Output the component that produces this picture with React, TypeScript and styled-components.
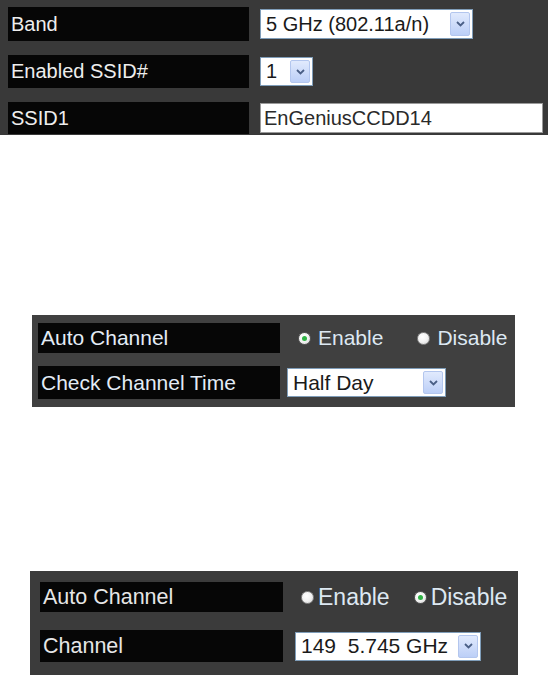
import React from "react";
import styled, { createGlobalStyle } from "styled-components";

const GlobalStyle = createGlobalStyle`
  html, body {
    margin: 0;
    padding: 0;
    background: #ffffff;
  }
  body {
    font-family: "Liberation Sans", Arial, sans-serif;
  }
`;

const Page = styled.div`
  display: flex;
  flex-direction: column;
  align-items: flex-start;
  width: 550px;
  height: 675px;
  overflow: hidden;
`;

const Panel = styled.div<{
  $w: number;
  $h: number;
  $mt: number;
  $ml: number;
  $pad: string;
  $bg: string;
  $gap: number;
}>`
  box-sizing: border-box;
  flex: none;
  width: ${(p) => p.$w}px;
  height: ${(p) => p.$h}px;
  margin: ${(p) => p.$mt}px 0 0 ${(p) => p.$ml}px;
  padding: ${(p) => p.$pad};
  background: ${(p) => p.$bg};
  display: flex;
  flex-direction: column;
  gap: ${(p) => p.$gap}px;
`;

const Row = styled.div<{ $h: number; $gap: number }>`
  display: flex;
  align-items: center;
  height: ${(p) => p.$h}px;
  gap: ${(p) => p.$gap}px;
`;

const Label = styled.div<{ $w: number; $size: number; $color: string }>`
  box-sizing: border-box;
  flex: none;
  width: ${(p) => p.$w}px;
  height: 100%;
  background: #060606;
  color: ${(p) => p.$color};
  font-size: ${(p) => p.$size}px;
  padding-left: 3px;
  display: flex;
  align-items: center;
  white-space: nowrap;
`;

const SelectBox = styled.div<{ $w: number; $h: number; $size: number }>`
  box-sizing: border-box;
  flex: none;
  width: ${(p) => p.$w}px;
  height: ${(p) => p.$h}px;
  background: #ffffff;
  border: 1px solid #7f9db9;
  display: flex;
  align-items: center;
  justify-content: space-between;
  padding: 2px 2px 2px 5px;
  font-size: ${(p) => p.$size}px;
  color: #1a1a1a;
  white-space: pre;
`;

const DropButton = styled.span`
  box-sizing: border-box;
  flex: none;
  width: 20px;
  height: 100%;
  border: 1px solid #b3c6ee;
  border-radius: 2px;
  background: linear-gradient(#e1eafd, #bccff7);
  display: flex;
  align-items: center;
  justify-content: center;
`;

const TextInput = styled.div<{ $w: number; $h: number; $size: number }>`
  box-sizing: border-box;
  flex: none;
  width: ${(p) => p.$w}px;
  height: ${(p) => p.$h}px;
  background: #ffffff;
  border: 1px solid #9a9a9a;
  padding-left: 3px;
  display: flex;
  align-items: center;
  font-size: ${(p) => p.$size}px;
  color: #2a2a2a;
`;

const RadioGroup = styled.div<{ $pl: number; $spread: number }>`
  display: flex;
  align-items: center;
  gap: ${(p) => p.$spread}px;
  padding-left: ${(p) => p.$pl}px;
`;

const RadioOption = styled.label<{ $size: number; $gap: number }>`
  display: flex;
  align-items: center;
  gap: ${(p) => p.$gap}px;
  font-size: ${(p) => p.$size}px;
  color: #dde8f2;
  white-space: nowrap;
`;

const RadioDot = styled.span<{ $on: boolean }>`
  box-sizing: border-box;
  width: 13px;
  height: 13px;
  border-radius: 50%;
  border: 1px solid ${(p) => (p.$on ? "#5a5a5a" : "#8a8a8a")};
  background: radial-gradient(circle at 40% 35%, #ffffff 0%, #f2f2f2 50%, #cfcfcf 100%);
  display: flex;
  align-items: center;
  justify-content: center;

  &::after {
    content: "";
    display: ${(p) => (p.$on ? "block" : "none")};
    width: 5px;
    height: 5px;
    border-radius: 50%;
    background: #2fb245;
  }
`;

const Chevron = () => (
  <svg width="9" height="6" viewBox="0 0 9 6">
    <path d="M1 1 L4.5 4.5 L8 1" fill="none" stroke="#4a5f86" strokeWidth="1.8" />
  </svg>
);

const Select: React.FC<{ w: number; h: number; size: number; value: string }> = ({
  w,
  h,
  size,
  value,
}) => (
  <SelectBox $w={w} $h={h} $size={size}>
    <span>{value}</span>
    <DropButton>
      <Chevron />
    </DropButton>
  </SelectBox>
);

const Radios: React.FC<{
  pl: number;
  spread: number;
  size: number;
  gap: number;
  enabled: boolean;
}> = ({ pl, spread, size, gap, enabled }) => (
  <RadioGroup $pl={pl} $spread={spread}>
    <RadioOption $size={size} $gap={gap}>
      <RadioDot $on={enabled} />
      Enable
    </RadioOption>
    <RadioOption $size={size} $gap={gap}>
      <RadioDot $on={!enabled} />
      Disable
    </RadioOption>
  </RadioGroup>
);

export default function App() {
  return (
    <>
      <GlobalStyle />
      <Page>
        <Panel $w={548} $h={135} $mt={0} $ml={0} $pad="7px 0 0 8px" $bg="#393939" $gap={14}>
          <Row $h={34} $gap={11}>
            <Label $w={241} $size={20} $color="#eeeeee">
              Band
            </Label>
            <Select w={213} h={30} size={20} value="5 GHz (802.11a/n)" />
          </Row>
          <Row $h={33} $gap={11}>
            <Label $w={241} $size={20} $color="#eeeeee">
              Enabled SSID#
            </Label>
            <Select w={53} h={29} size={20} value="1" />
          </Row>
          <Row $h={32} $gap={11}>
            <Label $w={241} $size={20} $color="#eeeeee">
              SSID1
            </Label>
            <TextInput $w={283} $h={30} $size={20}>
              EnGeniusCCDD14
            </TextInput>
          </Row>
        </Panel>

        <Panel $w={483} $h={92} $mt={180} $ml={32} $pad="8px 0 0 6px" $bg="#404040" $gap={13}>
          <Row $h={30} $gap={7}>
            <Label $w={242} $size={21} $color="#e3ecf6">
              Auto Channel
            </Label>
            <Radios pl={11} spread={34} size={21} gap={7} enabled={true} />
          </Row>
          <Row $h={33} $gap={7}>
            <Label $w={242} $size={21} $color="#e3ecf6">
              Check Channel Time
            </Label>
            <Select w={159} h={29} size={21} value="Half Day" />
          </Row>
        </Panel>

        <Panel $w={488} $h={104} $mt={164} $ml={30} $pad="11px 0 0 10px" $bg="#3b3b3b" $gap={18}>
          <Row $h={30} $gap={12}>
            <Label $w={243} $size={21.5} $color="#e6e6e6">
              Auto Channel
            </Label>
            <Radios pl={6} spread={24} size={23} gap={4} enabled={false} />
          </Row>
          <Row $h={32} $gap={12}>
            <Label $w={243} $size={21.5} $color="#e6e6e6">
              Channel
            </Label>
            <Select w={186} h={29} size={21} value={"149  5.745 GHz"} />
          </Row>
        </Panel>
      </Page>
    </>
  );
}
